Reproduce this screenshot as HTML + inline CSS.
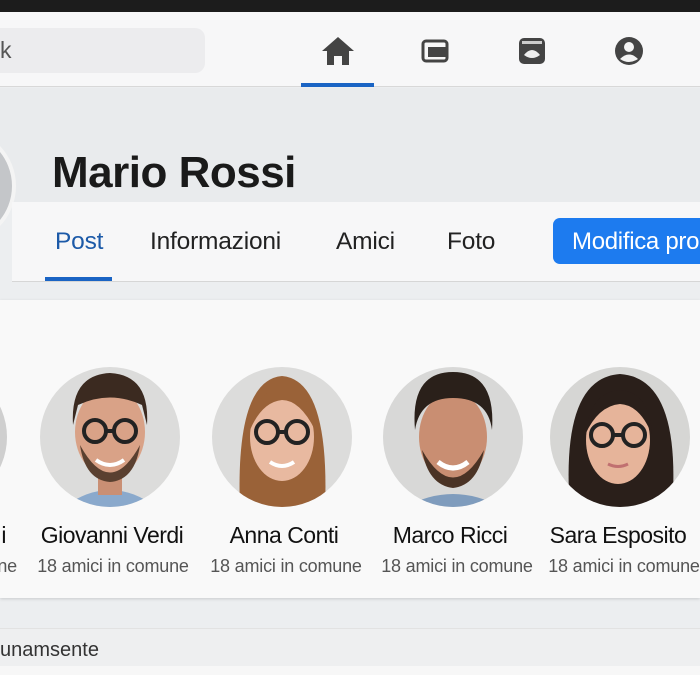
<!DOCTYPE html>
<html><head><meta charset="utf-8"><style>
*{margin:0;padding:0;box-sizing:border-box}
body{width:700px;height:675px;overflow:hidden;background:#eceef0;font-family:"Liberation Sans",sans-serif;position:relative}
.a{position:absolute}
.name{font-size:23px;color:#111;text-align:center;width:200px;letter-spacing:-0.5px;white-space:nowrap}
.sub{font-size:18px;color:#555;text-align:center;width:200px;letter-spacing:-0.2px;white-space:nowrap}
.tab{font-size:24.5px;color:#222;top:228px;letter-spacing:-0.2px}
</style></head><body>
<div class="a" style="left:0;top:0;width:700px;height:12px;background:#1c1c1c"></div>
<div class="a" style="left:0;top:12px;width:700px;height:75px;background:#f7f7f8;border-bottom:1px solid #d8d8d8"></div>
<div class="a" style="left:-20px;top:28px;width:225px;height:45px;background:#ececee;border-radius:10px"></div>
<div class="a" style="left:0;top:37px;font-size:23px;color:#555">k</div>
<svg class="a" style="left:320px;top:35px" width="36" height="32" viewBox="0 0 36 32"><path d="M18 2 L34 16 H29 V30 H22 V21 H14 V30 H7 V16 H2 Z" fill="#444"/></svg>
<svg class="a" style="left:421px;top:38px" width="30" height="26" viewBox="0 0 30 26"><rect x="2" y="3" width="24" height="20" rx="3" fill="none" stroke="#444" stroke-width="3"/><rect x="7" y="9" width="20" height="10" fill="#444"/></svg>
<svg class="a" style="left:518px;top:37px" width="28" height="28" viewBox="0 0 28 28"><rect x="1" y="1" width="26" height="26" rx="5" fill="#444"/><rect x="4" y="4" width="20" height="3" fill="#ccc"/><path d="M6 18 Q14 8 22 18 Q14 24 6 18Z" fill="#eee"/></svg>
<svg class="a" style="left:614px;top:36px" width="30" height="30" viewBox="0 0 30 30"><circle cx="15" cy="15" r="14" fill="#444"/><circle cx="15" cy="11" r="5" fill="#f4f4f4"/><path d="M6 23 Q15 14 24 23 Q15 29 6 23Z" fill="#f4f4f4"/></svg>
<div class="a" style="left:301px;top:83px;width:73px;height:4px;background:#1a64c4"></div>
<div class="a" style="left:0;top:88px;width:700px;height:114px;background:#e9ebed"></div>
<div class="a" style="left:-100px;top:128px;width:116px;height:116px;border-radius:50%;background:#c4c6c9;border:4px solid #f4f4f4"></div>
<div class="a" style="left:52px;top:148px;font-size:44px;font-weight:bold;color:#1a1a1a;letter-spacing:-0.5px">Mario Rossi</div>
<div class="a" style="left:12px;top:202px;width:688px;height:80px;background:#f7f7f8;border-bottom:1px solid #d6d6d6"></div>
<div class="a tab" style="left:55px;color:#1c5aa8">Post</div>
<div class="a tab" style="left:150px">Informazioni</div>
<div class="a tab" style="left:336px">Amici</div>
<div class="a tab" style="left:447px">Foto</div>
<div class="a" style="left:45px;top:277px;width:67px;height:4px;background:#1a64c4"></div>
<div class="a" style="left:553px;top:218px;width:160px;height:46px;background:#1d7bef;border-radius:7px;color:#fff;font-size:24px;padding:10px 0 0 19px;white-space:nowrap;letter-spacing:-0.3px">Modifica pro</div>
<div class="a" style="left:0;top:300px;width:700px;height:298px;background:#f9f9f9;box-shadow:0 1px 3px rgba(0,0,0,.15)"></div>
<svg class="a" style="left:0;top:366px" width="700" height="142" viewBox="0 366 700 142">
<defs>
<clipPath id="c1"><circle cx="110" cy="437" r="70"/></clipPath>
<clipPath id="c2"><circle cx="282" cy="437" r="70"/></clipPath>
<clipPath id="c3"><circle cx="453" cy="437" r="70"/></clipPath>
<clipPath id="c4"><circle cx="620" cy="437" r="70"/></clipPath>
</defs>
<circle cx="-63" cy="437" r="70" fill="#cfcfcf"/>
<g clip-path="url(#c1)"><rect x="30" y="360" width="160" height="150" fill="#dcdcdb"/>
<path d="M60 510 Q110 470 160 510Z" fill="#8aa9cc"/><rect x="98" y="470" width="24" height="25" fill="#c98f74"/>
<ellipse cx="110" cy="432" rx="35" ry="45" fill="#d9a287"/><path d="M73 425 Q70 375 110 373 Q150 375 147 425 L142 405 Q110 390 78 405Z" fill="#3b2a20"/>
<path d="M80 445 Q110 500 140 445 Q135 480 110 482 Q85 480 80 445Z" fill="#5a4030"/>
<g fill="none" stroke="#222" stroke-width="4"><circle cx="95" cy="431" r="11"/><circle cx="125" cy="431" r="11"/><path d="M106 431h8"/></g>
<path d="M96 460 Q110 470 124 460" stroke="#fff" stroke-width="4" fill="none"/></g>
<g clip-path="url(#c2)"><rect x="200" y="360" width="170" height="150" fill="#dcdcdb"/>
<path d="M240 510 Q235 380 282 376 Q330 380 325 510Z" fill="#9a6238"/>
<ellipse cx="282" cy="437" rx="32" ry="44" fill="#e8b9a0"/><path d="M250 430 Q255 390 282 388 Q312 390 315 430 Q300 400 282 400 Q262 402 250 430Z" fill="#9a6238"/>
<g fill="none" stroke="#222" stroke-width="4"><circle cx="267" cy="432" r="11"/><circle cx="297" cy="432" r="11"/><path d="M278 432h8"/></g>
<path d="M270 462 Q282 470 294 462" stroke="#fff" stroke-width="4" fill="none"/></g>
<g clip-path="url(#c3)"><rect x="380" y="360" width="150" height="150" fill="#d8d8d7"/>
<path d="M400 510 Q453 478 506 510Z" fill="#7f9cbd"/>
<ellipse cx="453" cy="437" rx="34" ry="45" fill="#c98e72"/><path d="M415 430 Q410 372 453 372 Q496 372 492 430 Q488 398 453 398 Q420 398 415 430Z" fill="#2a201a"/>
<path d="M422 450 Q453 505 484 450 Q478 485 453 488 Q428 485 422 450Z" fill="#4a3325"/>
<path d="M438 462 Q453 474 468 462" stroke="#fff" stroke-width="5" fill="none"/></g>
<g clip-path="url(#c4)"><rect x="545" y="360" width="150" height="150" fill="#d6d6d4"/>
<path d="M570 510 Q560 378 620 374 Q682 378 672 510Z" fill="#2a1f1a"/>
<ellipse cx="618" cy="440" rx="32" ry="44" fill="#e6b49a"/><path d="M585 435 Q590 392 620 390 Q650 392 652 435 Q640 405 620 404 Q598 406 585 435Z" fill="#2a1f1a"/>
<g fill="none" stroke="#222" stroke-width="4"><circle cx="602" cy="435" r="11"/><circle cx="634" cy="435" r="11"/><path d="M613 435h10"/></g>
<path d="M608 464 Q618 469 628 464" stroke="#c07070" stroke-width="3" fill="none"/></g>
</svg>
<div class="a name" style="left:-100px;top:522px;text-align:right;width:106px">i</div>
<div class="a sub" style="left:-100px;top:556px;text-align:right;width:117px">ne</div>
<div class="a name" style="left:12px;top:522px">Giovanni Verdi</div>
<div class="a sub" style="left:13px;top:556px">18 amici in comune</div>
<div class="a name" style="left:184px;top:522px">Anna Conti</div>
<div class="a sub" style="left:186px;top:556px">18 amici in comune</div>
<div class="a name" style="left:350px;top:522px">Marco Ricci</div>
<div class="a sub" style="left:357px;top:556px">18 amici in comune</div>
<div class="a name" style="left:518px;top:522px">Sara Esposito</div>
<div class="a sub" style="left:524px;top:556px">18 amici in comune</div>
<div class="a" style="left:0;top:628px;width:700px;height:38px;background:#eeeff0;border-top:1px solid #e2e2e2"></div>
<div class="a" style="left:0;top:639px;font-size:20px;color:#333">unamsente</div>
<div class="a" style="left:0;top:666px;width:700px;height:9px;background:#f7f7f7"></div>
</body></html>
